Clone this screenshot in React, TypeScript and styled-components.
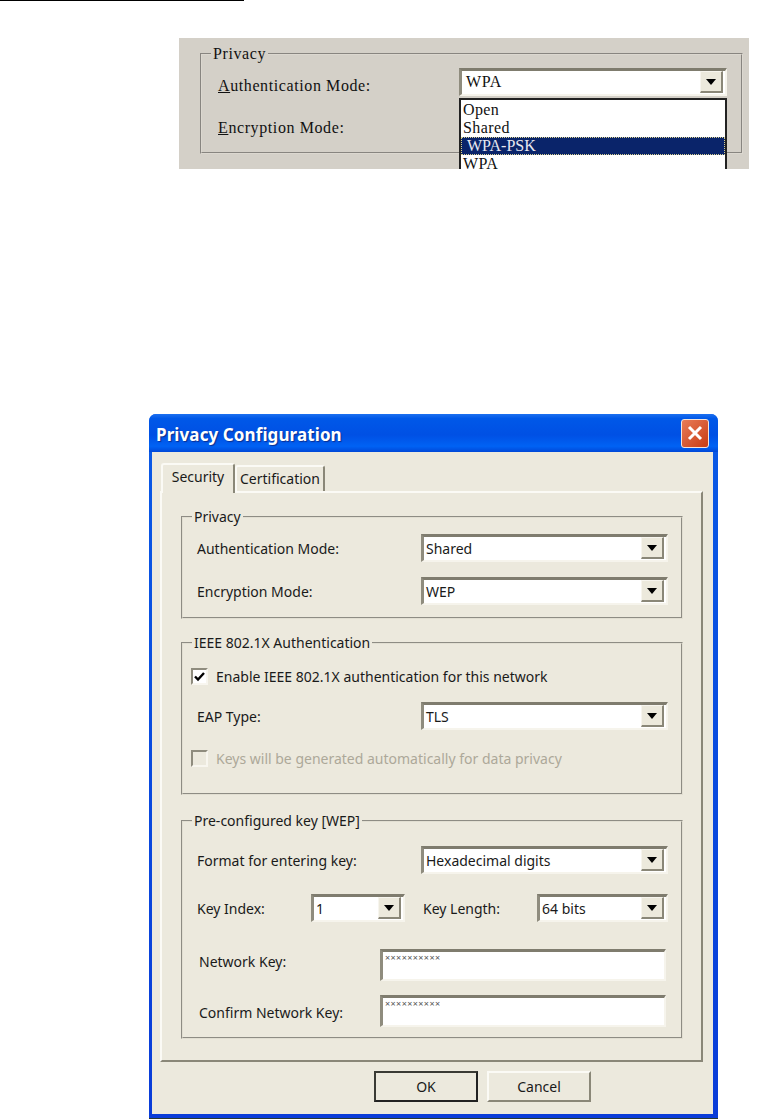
import styled, { createGlobalStyle } from "styled-components";

const GlobalStyle = createGlobalStyle`
  html, body {
    margin: 0;
    padding: 0;
    background: #ffffff;
  }
  * {
    box-sizing: border-box;
  }
`;

const Arrow = () => (
  <svg width="10" height="6" viewBox="0 0 10 6">
    <path d="M0 0H10L5 6Z" fill="#000000" />
  </svg>
);

const Select = ({ value, width }: { value: string; width: number }) => (
  <Combo $width={width}>
    <ComboValue>{value}</ComboValue>
    <ComboButton>
      <Arrow />
    </ComboButton>
  </Combo>
);

const App = () => {
  return (
    <Page>
      <GlobalStyle />
      <TopRule />

      <Snapshot>
        <SnapshotGroup>
          <legend>Privacy</legend>
          <Row $mt={6}>
            <SnapshotLabel $width={241}>
              <u>A</u>uthentication Mode:
            </SnapshotLabel>
            <Select value="WPA" width={268} />
          </Row>
          <Row $mt={14}>
            <SnapshotLabel $width={241}>
              <u>E</u>ncryption Mode:
            </SnapshotLabel>
          </Row>
        </SnapshotGroup>
        <DropList>
          <DropItem>Open</DropItem>
          <DropItem>Shared</DropItem>
          <DropItem $selected>WPA-PSK</DropItem>
          <DropItem>WPA</DropItem>
        </DropList>
      </Snapshot>

      <Dialog>
        <TitleBar>
          <Title>Privacy Configuration</Title>
          <CloseButton>
            <svg width="16" height="16" viewBox="0 0 16 16">
              <path d="M2 2L14 14M14 2L2 14" stroke="#ffffff" strokeWidth="3" />
            </svg>
          </CloseButton>
        </TitleBar>

        <DialogBody>
          <Tabs>
            <Tab $active>Security</Tab>
            <Tab>Certification</Tab>
          </Tabs>

          <TabPanel>
            <Group $mt={16} $height={110}>
              <legend>Privacy</legend>
              <Row $mt={9}>
                <Label $width={224}>Authentication Mode:</Label>
                <Select value="Shared" width={247} />
              </Row>
              <Row $mt={15}>
                <Label $width={224}>Encryption Mode:</Label>
                <Select value="WEP" width={247} />
              </Row>
            </Group>

            <Group $mt={16} $height={160}>
              <legend>IEEE 802.1X Authentication</legend>
              <CheckRow $mt={16}>
                <CheckBox>
                  <svg width="11" height="11" viewBox="0 0 11 11">
                    <path d="M1 5.5L4 8.5L10 2" fill="none" stroke="#000000" strokeWidth="2.4" />
                  </svg>
                </CheckBox>
                Enable IEEE 802.1X authentication for this network
              </CheckRow>
              <Row $mt={17}>
                <Label $width={224}>EAP Type:</Label>
                <Select value="TLS" width={247} />
              </Row>
              <CheckRow $mt={19} $disabled>
                <CheckBox $disabled />
                Keys will be generated automatically for data privacy
              </CheckRow>
            </Group>

            <Group $mt={18} $height={226}>
              <legend>Pre-configured key [WEP]</legend>
              <Row $mt={17}>
                <Label $width={224}>Format for entering key:</Label>
                <Select value="Hexadecimal digits" width={247} />
              </Row>
              <Row $mt={20}>
                <Label $width={114}>Key Index:</Label>
                <Select value="1" width={94} />
                <Label $width={114} $ml={18}>
                  Key Length:
                </Label>
                <Select value="64 bits" width={131} />
              </Row>
              <Row $mt={27}>
                <KeyLabel $lift={8}>Network Key:</KeyLabel>
                <KeyField>××××××××××</KeyField>
              </Row>
              <Row $mt={14}>
                <KeyLabel $drop={2}>Confirm Network Key:</KeyLabel>
                <KeyField>××××××××××</KeyField>
              </Row>
            </Group>
          </TabPanel>

          <Footer>
            <Button $primary>OK</Button>
            <Button>Cancel</Button>
          </Footer>
        </DialogBody>
      </Dialog>
    </Page>
  );
};

export default App;

const Page = styled.div`
  width: 764px;
  height: 1119px;
  overflow: hidden;
  font-family: "Noto Sans", "Open Sans", sans-serif;
  font-size: 14px;
  color: #1a1a1a;
`;

const TopRule = styled.div`
  width: 244px;
  height: 1px;
  background: #000000;
`;

const Snapshot = styled.div`
  position: relative;
  width: 570px;
  height: 131px;
  margin: 37px 0 0 179px;
  padding: 8px 0 0 21px;
  overflow: hidden;
  background: #d4d0c8;
  font-family: "Liberation Serif", serif;
  font-size: 16px;
  letter-spacing: 0.6px;
  color: #111111;
`;

const ComboValue = styled.span`
  flex: 1;
  padding-left: 2px;
  white-space: nowrap;
  overflow: hidden;
`;

const Group = styled.fieldset<{ $mt?: number; $height?: number }>`
  display: block;
  width: 502px;
  height: ${(p) => p.$height}px;
  margin: ${(p) => p.$mt ?? 0}px 0 0 0;
  padding: 0 13px 0 14px;
  border: 2px groove #e2dfd2;
  min-width: 0;

  legend {
    height: 16px;
    margin-left: -5px;
    padding: 0 2px;
    line-height: 16px;
    white-space: nowrap;
  }
`;

const SnapshotGroup = styled(Group)`
  width: 543px;
  height: 108px;
  padding: 0 0 0 16px;
  border-color: #dcd8d0;

  legend {
    margin-left: -7px;
  }

  ${ComboValue} {
    padding-left: 4px;
  }
`;

const Row = styled.div<{ $mt?: number }>`
  display: flex;
  align-items: center;
  margin-top: ${(p) => p.$mt ?? 0}px;
`;

const Label = styled.span<{ $width: number; $ml?: number }>`
  flex: none;
  width: ${(p) => p.$width}px;
  margin-left: ${(p) => p.$ml ?? 0}px;
  white-space: nowrap;
`;

const SnapshotLabel = styled(Label)`
  height: 28px;
  padding-top: 4px;
  line-height: 28px;
`;

const KeyLabel = styled.span<{ $lift?: number; $drop?: number }>`
  flex: none;
  width: 183px;
  padding: ${(p) => p.$drop ?? 0}px 0 ${(p) => p.$lift ?? 0}px 2px;
  white-space: nowrap;
`;

const Combo = styled.div<{ $width: number }>`
  flex: none;
  display: flex;
  align-items: center;
  width: ${(p) => p.$width}px;
  height: 28px;
  padding: 0 2px 1px 0;
  background: #ffffff;
  border-top: 3px solid #7f7c6e;
  border-left: 3px solid #8f8c7e;
  border-right: 2px solid #f6f4ec;
  border-bottom: 2px solid #f6f4ec;
`;

const ComboButton = styled.span`
  flex: none;
  display: flex;
  align-items: center;
  justify-content: center;
  width: 23px;
  height: 100%;
  background: #ece9dc;
  border-top: 1px solid #f7f5ee;
  border-left: 1px solid #f7f5ee;
  border-right: 2px solid #8a8778;
  border-bottom: 2px solid #8a8778;
`;

const DropList = styled.div`
  position: absolute;
  top: 60px;
  left: 280px;
  width: 268px;
  height: 90px;
  padding-top: 1px;
  background: #ffffff;
  border: 2px solid #222222;
`;

const DropItem = styled.div<{ $selected?: boolean }>`
  height: 18px;
  line-height: 18px;
  padding-left: ${(p) => (p.$selected ? 6 : 2)}px;
  letter-spacing: ${(p) => (p.$selected ? 0 : 0.4)}px;
  background: ${(p) => (p.$selected ? "#0a246a" : "transparent")};
  color: ${(p) => (p.$selected ? "#e8e8f0" : "#111111")};
  outline: ${(p) => (p.$selected ? "1px dotted #d8d090" : "none")};
  outline-offset: -1px;
`;

const Dialog = styled.div`
  display: flex;
  flex-direction: column;
  width: 569px;
  height: 705px;
  margin: 245px 0 0 149px;
  border-bottom: 1px solid #2a3a30;
  border-radius: 7px 7px 0 0;
  overflow: hidden;
  background: linear-gradient(#0a5ae6, #0a3cd8);
`;

const TitleBar = styled.div`
  flex: none;
  display: flex;
  align-items: center;
  justify-content: space-between;
  height: 38px;
  padding: 0 9px 0 7px;
  background: linear-gradient(#1d70f0 0, #0058e8 12%, #0050e4 55%, #0062f4 85%, #0048d8 100%);
`;

const Title = styled.span`
  padding-top: 2px;
  font-family: "Noto Sans", sans-serif;
  font-size: 17px;
  font-weight: 700;
  letter-spacing: 0.1px;
  color: #ffffff;
  text-shadow: 1px 1px 1px #0a2f90;
`;

const CloseButton = styled.span`
  display: flex;
  align-items: center;
  justify-content: center;
  width: 28px;
  height: 29px;
  border: 1px solid #f4e4dc;
  border-radius: 3px;
  background: linear-gradient(135deg, #e87c58, #c83c14);
`;

const DialogBody = styled.div`
  flex: 1;
  display: flex;
  flex-direction: column;
  margin: 0 5px 4px 3px;
  padding: 11px 0 0 8px;
  background: #ece9dd;
  box-shadow: 0 4px 0 #0a3cd8;
`;

const Tabs = styled.div`
  display: flex;
  align-items: flex-end;
  height: 28px;
  margin-left: 1px;
`;

const Tab = styled.div<{ $active?: boolean }>`
  position: relative;
  z-index: ${(p) => (p.$active ? 1 : 0)};
  display: flex;
  align-items: center;
  justify-content: center;
  width: ${(p) => (p.$active ? 74 : 90)}px;
  height: ${(p) => (p.$active ? 30 : 26)}px;
  margin-bottom: ${(p) => (p.$active ? -2 : 0)}px;
  padding-bottom: ${(p) => (p.$active ? 6 : 2)}px;
  background: #ece9dd;
  border-top: 2px solid #fbfaf5;
  border-left: 2px solid #fbfaf5;
  border-right: 2px solid #8a8778;
  border-radius: 3px 3px 0 0;
`;

const TabPanel = styled.div`
  width: 543px;
  height: 571px;
  padding: 0 0 0 19px;
  border-top: 2px solid #fbfaf5;
  border-left: 2px solid #fbfaf5;
  border-right: 2px solid #8a8778;
  border-bottom: 2px solid #8a8778;
`;

const CheckRow = styled.div<{ $mt: number; $disabled?: boolean }>`
  display: flex;
  align-items: center;
  gap: 8px;
  height: 18px;
  margin: ${(p) => p.$mt}px 0 0 -6px;
  white-space: nowrap;
  color: ${(p) => (p.$disabled ? "#aca899" : "inherit")};
`;

const CheckBox = styled.span<{ $disabled?: boolean }>`
  flex: none;
  display: flex;
  align-items: center;
  justify-content: center;
  width: 17px;
  height: 17px;
  background: ${(p) => (p.$disabled ? "#ece9dd" : "#ffffff")};
  border-top: 2px solid #8f8c7e;
  border-left: 2px solid #8f8c7e;
  border-right: 2px solid #f8f6ef;
  border-bottom: 2px solid #f8f6ef;
`;

const KeyField = styled.div`
  flex: none;
  width: 286px;
  height: 32px;
  padding: 1px 0 0 2px;
  background: #ffffff;
  border-top: 3px solid #7f7c6e;
  border-left: 3px solid #8f8c7e;
  border-right: 2px solid #f6f4ec;
  border-bottom: 2px solid #f6f4ec;
  font-size: 9px;
  line-height: 10px;
  letter-spacing: 0.4px;
  color: #555555;
`;

const Footer = styled.div`
  display: flex;
  gap: 9px;
  margin-top: 9px;
  padding-left: 214px;
`;

const Button = styled.div<{ $primary?: boolean }>`
  display: flex;
  align-items: center;
  justify-content: center;
  width: 104px;
  height: 31px;
  background: #ece9dd;
  border-top: 2px solid ${(p) => (p.$primary ? "#3a3a34" : "#fbfaf5")};
  border-left: 2px solid ${(p) => (p.$primary ? "#3a3a34" : "#fbfaf5")};
  border-right: 2px solid ${(p) => (p.$primary ? "#222222" : "#8a8778")};
  border-bottom: 2px solid ${(p) => (p.$primary ? "#222222" : "#8a8778")};
`;
